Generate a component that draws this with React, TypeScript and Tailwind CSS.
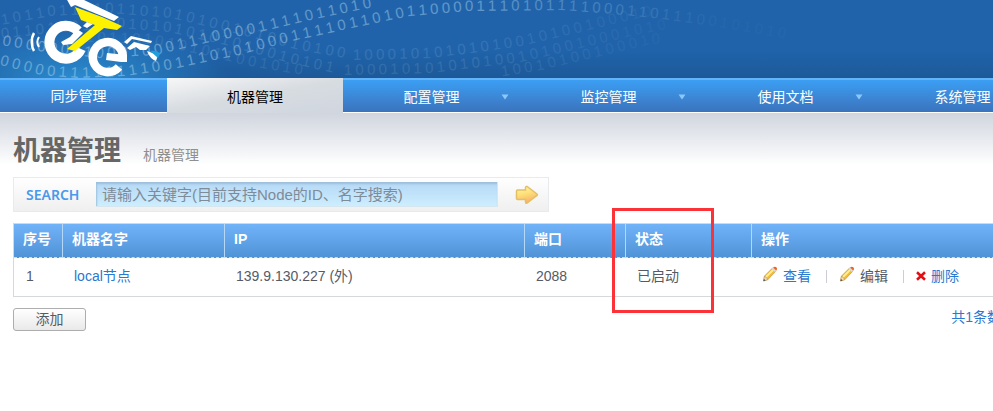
import React from "react";

type Point = [number, number];

interface DigitTrail {
  digits: string;
  points: Point[];
  opacity: number;
}

const brightTrails: DigitTrail[] = [
  {
    digits: "00000001000100011100001111011010",
    points: [[7, 40], [45, 46], [100, 52], [155, 49], [209, 36], [255, 27], [309, 14], [368, 2]],
    opacity: 0.4,
  },
  {
    digits: "00000111111110011101010001111011010110000111010111100011011100101010",
    points: [[5, 60], [42, 69], [78, 72], [126, 70], [172, 63], [238, 49], [296, 34], [351, 22], [409, 10], [467, 5], [560, 4], [604, 7], [663, 13], [720, 21], [800, 35]],
    opacity: 0.4,
  },
];

const faintTrails: DigitTrail[] = [
  {
    digits: "101101101011010101001010010100",
    points: [[5, 18], [50, 10], [110, 7], [172, 12], [235, 27], [300, 44], [345, 52]],
    opacity: 0.13,
  },
  {
    digits: "01101101010101010101010010101",
    points: [[5, 32], [60, 26], [120, 22], [170, 26], [230, 40], [290, 57], [340, 68]],
    opacity: 0.13,
  },
  {
    digits: "1011010101011001010",
    points: [[90, 36], [150, 38], [200, 48], [250, 60], [310, 70]],
    opacity: 0.1,
  },
  {
    digits: "10001010101010010100100010",
    points: [[357, 54], [430, 52], [480, 46], [520, 40], [580, 26], [620, 16], [660, 8]],
    opacity: 0.13,
  },
  {
    digits: "1000101010101001010010001010",
    points: [[348, 69], [430, 67], [480, 61], [520, 56], [580, 42], [630, 30], [660, 24]],
    opacity: 0.12,
  },
  {
    digits: "10010100100010",
    points: [[505, 70], [540, 64], [600, 50], [650, 38], [700, 36]],
    opacity: 0.12,
  },
];

function locate(points: Point[], x: number): { y: number; angle: number } {
  let i = 0;
  while (i < points.length - 2 && points[i + 1][0] < x) i += 1;
  const [x0, y0] = points[i];
  const [x1, y1] = points[i + 1];
  const slope = (y1 - y0) / (x1 - x0);
  return { y: y0 + slope * (x - x0), angle: (Math.atan(slope) * 180) / Math.PI };
}

function Trail({ trail }: { trail: DigitTrail }) {
  return (
    <g opacity={trail.opacity}>
      {trail.digits.split("").map((digit, i) => {
        const x = trail.points[0][0] + i * 11.6;
        const { y, angle } = locate(trail.points, x);
        const fade = x > 480 ? Math.max(0.08, 1 - (x - 480) / 260) : 1;
        return (
          <text
            key={i}
            x={x}
            y={y + 6}
            textAnchor="middle"
            transform={`rotate(${angle} ${x} ${y})`}
            opacity={fade}
          >
            {digit}
          </text>
        );
      })}
    </g>
  );
}

function Logo() {
  return (
    <g>
      <g fill="none" stroke="#fff">
        <path d="M34 33C31 38 31 46 34 51" strokeWidth="2.5" />
        <path d="M39 37C37 40 37 44 39 47" strokeWidth="2" />
        <path d="M78 31A16.500 16.500 0 1 0 81 49" strokeWidth="10" />
        <path d="M122.500 60A15 15 0 1 0 119 67" strokeWidth="8.500" />
      </g>
      <path fill="#fff" d="M61 42L70 37L77 29L83 33L72 44L63 45Z" />
      <path fill="#fff" d="M83 26L87 22L93 24L87 28Z" />
      <path fill="#fff" d="M107 53L127 55L127 62L121 62L106 60Z" />
      <path fill="#fff" d="M66 -2L82 -1L119 17L114 21L75 5L71 7Z" />
      <path fill="#fff200" d="M75 7L102 17L122 26L117 30L104 28L75 51L67 49L95 25L81 20Z" />
      <path fill="#fff" d="M124 42L131 36L152 41L151 43L132 39L127 44Z" />
      <path fill="#fff" d="M127 48L134 42L150 46L146 50L140 50L136 47L130 50Z" />
      <path fill="#fff" d="M147 51L158 55L156 61Q150 59 147 51Z" />
      <path fill="#209ddd" d="M150 51Q158 50 160 54L158 58Z" />
    </g>
  );
}

function Banner() {
  return (
    <header className="h-[78px] overflow-hidden bg-[#2063aa] bg-[radial-gradient(ellipse_150px_56px_at_80px_84px,#2d91d5_0%,#2d91d500_100%),linear-gradient(to_bottom,#2063aa_65%,#1c5999_100%)]">
      <svg
        width="1000"
        height="78"
        viewBox="0 0 1000 78"
        role="img"
        aria-label="eTe"
        className="block max-w-none fill-[#c5e6fa] font-['Liberation_Sans',sans-serif] text-[15px]"
      >
        {faintTrails.map((trail, i) => (
          <Trail key={i} trail={trail} />
        ))}
        {brightTrails.map((trail, i) => (
          <Trail key={i} trail={trail} />
        ))}
        <Logo />
      </svg>
    </header>
  );
}

function Caret() {
  return (
    <svg viewBox="0 0 8 6" className="absolute top-[14px] right-[11px] h-[6px] w-[8px]" aria-hidden="true">
      <path d="M0.500 0.500H7.500L4 5.500Z" fill="#8cc8fb" />
    </svg>
  );
}

const menus = ["配置管理", "监控管理", "使用文档", "系统管理"];

function Nav() {
  return (
    <nav className="flex h-[35px] overflow-hidden text-[14px] text-white">
      <a
        href="#sync"
        className="flex w-[167px] shrink-0 items-center justify-center border-t-2 border-b border-t-[#63b3f8] border-b-white bg-linear-to-b from-[#3b9ff4] to-[#3a73bd] pr-[10px]"
      >
        同步管理
      </a>
      <a
        href="#machines"
        aria-current="page"
        className="flex w-[176px] shrink-0 items-center justify-center bg-linear-170 from-[#f7f7f7] via-[#d7dce1] to-[#d0d6df] pt-[3px] text-black"
      >
        机器管理
      </a>
      <div className="flex flex-1 border-t-2 border-b border-t-[#63b3f8] border-b-white bg-linear-to-b from-[#3b9ff4] to-[#3a73bd]">
        {menus.map((menu) => (
          <a key={menu} href="#menu" className="relative flex w-[177px] shrink-0 items-center justify-center pt-[2px]">
            {menu}
            <Caret />
          </a>
        ))}
      </div>
    </nav>
  );
}

function ArrowIcon() {
  return (
    <svg viewBox="0 0 24 20" className="h-5 w-6" aria-hidden="true">
      <defs>
        <linearGradient id="arrow" x1="0" y1="0" x2="0.3" y2="1">
          <stop offset="0" stopColor="#fff6b0" />
          <stop offset="0.5" stopColor="#fde178" />
          <stop offset="1" stopColor="#fbb26c" />
        </linearGradient>
      </defs>
      <path
        d="M1.500 6Q1.500 5 2.500 5H10.500V2.500Q10.500 1 12 1.500L22 9Q22.700 9.700 22 10.400L12 18Q10.500 18.800 10.500 17V14.500H2.500Q1.500 14.500 1.500 13.500Z"
        fill="url(#arrow)"
        stroke="#e3c066"
        strokeWidth="1.500"
      />
    </svg>
  );
}

function PencilIcon() {
  return (
    <svg viewBox="0 0 16 16" className="mt-[-4px] h-4 w-4 shrink-0" aria-hidden="true">
      <path d="M1.500 15L2.500 10L10.500 2L14 5L6 13.500Z" fill="#f4bd2c" stroke="#b58d48" strokeWidth="0.600" />
      <path d="M4 11L11 4" stroke="#ffec9c" strokeWidth="1.800" />
      <path d="M1.500 15L2.500 10L6 13.500Z" fill="#f0dcba" stroke="#a88a5c" strokeWidth="0.500" />
      <path d="M1.500 15L2 13L3.500 14.400Z" fill="#444" />
      <path d="M9.500 3L11 1.500L14.300 4.700L13 6Z" fill="#d9dde2" />
      <path d="M11 1.500Q13 0 14.600 1.500Q15.800 3 14.300 4.700Z" fill="#ee6420" />
    </svg>
  );
}

function CrossIcon() {
  return (
    <svg viewBox="0 0 10 10" className="h-[10px] w-[10px] shrink-0" aria-hidden="true">
      <path d="M1 1.300L9 8.700M9 1.300L1 8.700" stroke="#e30f14" strokeWidth="2.600" />
    </svg>
  );
}

function SearchBar() {
  return (
    <form
      className="mt-[7px] flex h-[35px] w-[536px] items-center border border-[#e8ebee] bg-linear-to-b from-white to-[#efefef] pl-[12px]"
      onSubmit={(event) => event.preventDefault()}
    >
      <label htmlFor="keyword" className="w-[70px] font-['Noto_Sans','Open_Sans',sans-serif] text-[14px] font-semibold text-[#4a99ea]">
        SEARCH
      </label>
      <input
        id="keyword"
        type="text"
        placeholder="请输入关键字(目前支持Node的ID、名字搜索)"
        className="h-[25px] w-[402px] border-r border-b border-[#d5e6ee] bg-linear-to-b from-[#b5d8f6] to-[#cdeefd] pl-[6px] text-[15px] shadow-[inset_1px_2px_2px_#9dbfdc] outline-none placeholder:text-[#7e8b99]"
      />
      <button type="submit" aria-label="搜索" className="ml-[17px]">
        <ArrowIcon />
      </button>
    </form>
  );
}

function Divider() {
  return <span className="h-[13px] w-px bg-[#cdcdd6]" />;
}

function MachineTable() {
  const head = "border-l border-[#b5d7f8] pb-[2px] pl-[9px] text-left font-bold first:border-l-0";
  const cell = "pb-[2px] pl-[12px]";
  return (
    <table className="mt-[11px] w-full table-fixed border-separate border-spacing-0 border border-[#d6d9dc] text-[14px]">
      <colgroup>
        <col className="w-[48px]" />
        <col className="w-[162px]" />
        <col className="w-[300px]" />
        <col className="w-[101px]" />
        <col className="w-[126px]" />
        <col />
      </colgroup>
      <thead className="text-white">
        <tr className="h-[34px] bg-linear-to-b from-[#70b3f9] to-[#4f92d6] *:border-b *:border-b-[#d3dbe4] *:[border-bottom-style:dashed]">
          <th className={head}>序号</th>
          <th className={head}>机器名字</th>
          <th className={head}>IP</th>
          <th className={head}>端口</th>
          <th className={`${head} relative`}>
            状态
            <span className="pointer-events-none absolute top-[-16px] left-[-14px] z-10 h-[105px] w-[102px] border-3 border-[#fb3338]" />
          </th>
          <th className={head}>操作</th>
        </tr>
      </thead>
      <tbody className="text-[#555b66]">
        <tr className="h-[38px]">
          <td className={cell}>1</td>
          <td className={cell}>
            <a href="#node" className="text-[#2a78cf]">local节点</a>
          </td>
          <td className={cell}>139.9.130.227 (外)</td>
          <td className={cell}>2088</td>
          <td className={cell}>已启动</td>
          <td className="pb-[2px] pl-[11px]">
            <div className="flex items-center">
              <PencilIcon />
              <a href="#view" className="ml-[5px] text-[#2a78cf]">查看</a>
              <span className="ml-[15px] flex"><Divider /></span>
              <span className="ml-[12px] flex"><PencilIcon /></span>
              <a href="#edit" className="ml-[5px]">编辑</a>
              <span className="ml-[15px] flex"><Divider /></span>
              <span className="ml-[12px] flex"><CrossIcon /></span>
              <a href="#delete" className="ml-[5px] text-[#2a78cf]">删除</a>
            </div>
          </td>
        </tr>
      </tbody>
    </table>
  );
}

export default function App() {
  return (
    <div className="min-h-screen overflow-x-hidden bg-white font-['Liberation_Sans','Noto_Sans_CJK_SC',sans-serif]">
      <Banner />
      <Nav />
      <main className="-mr-2 bg-linear-to-b from-[#d0d5de] to-white to-[52px] pl-[13px]">
        <div className="flex items-baseline pt-[19px]">
          <h1 className="text-[27px] leading-[38px] font-bold text-[#666]">机器管理</h1>
          <span className="ml-[22px] text-[14px] text-[#8f8f8f]">机器管理</span>
        </div>
        <SearchBar />
        <MachineTable />
        <div className="mt-[11px] flex items-start justify-between text-[14px]">
          <button
            type="button"
            className="h-[23px] w-[73px] rounded-[3px] border border-[#adadad] bg-linear-to-b from-white to-[#e9e9e9] leading-[19px] text-[#555b66]"
          >
            添加
          </button>
          <span className="leading-[18px] text-[#2a78cf]">共1条数</span>
        </div>
      </main>
    </div>
  );
}
